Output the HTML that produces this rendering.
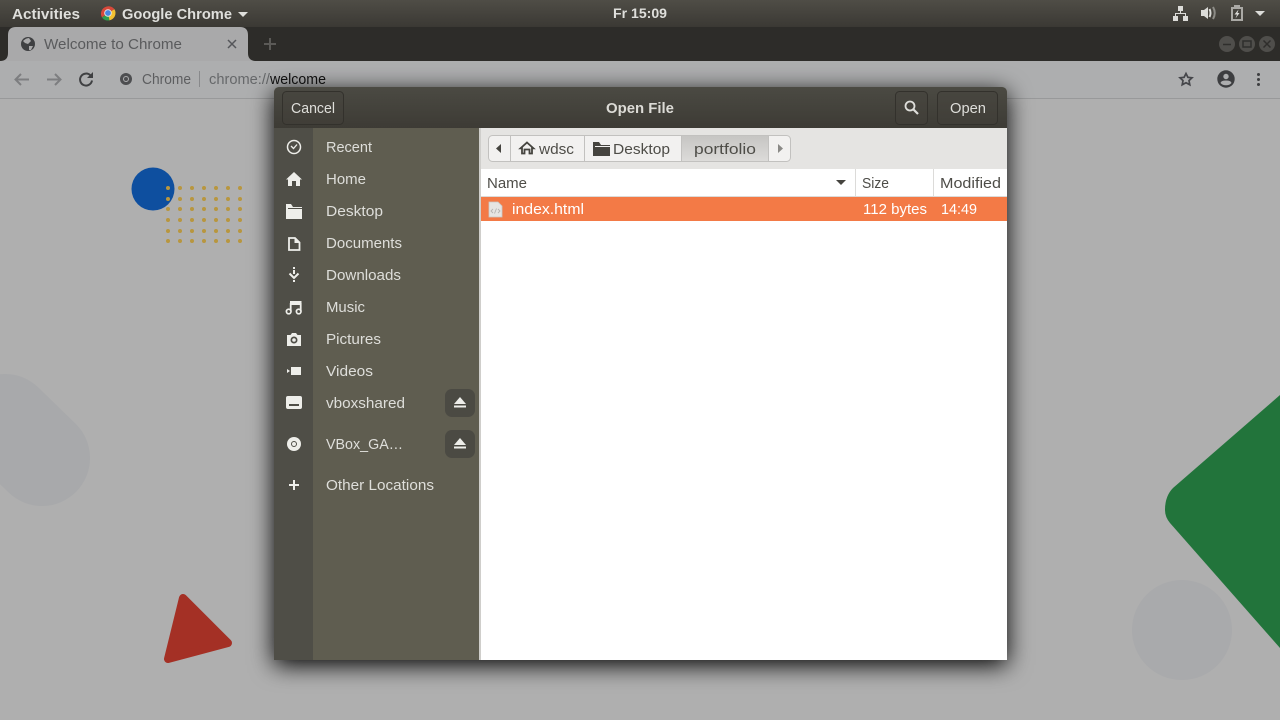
<!DOCTYPE html>
<html><head><meta charset="utf-8"><title>Open File</title>
<style>
html,body{margin:0;padding:0;width:1280px;height:720px;overflow:hidden;background:#afafaf}
svg{display:block}
text{font-family:"Liberation Sans",sans-serif;font-size:14.5px;white-space:pre}
.s{fill:#dededa}
.d{fill:#4e4d48}
.w{fill:#fff}
</style></head><body>
<svg width="1280" height="720" viewBox="0 0 1280 720" xmlns="http://www.w3.org/2000/svg">
<defs>
<linearGradient id="top" x1="0" y1="0" x2="0" y2="1"><stop offset="0" stop-color="#4f4d46"/><stop offset="1" stop-color="#3b3934"/></linearGradient>
<linearGradient id="hdr" x1="0" y1="0" x2="0" y2="1"><stop offset="0" stop-color="#4b4a43"/><stop offset="1" stop-color="#3d3b35"/></linearGradient>
<linearGradient id="pf" x1="0" y1="0" x2="0" y2="1"><stop offset="0" stop-color="#c6c5c3"/><stop offset="1" stop-color="#dcdbd9"/></linearGradient>
<filter id="sh" x="-10%" y="-10%" width="120%" height="120%"><feDropShadow dx="0" dy="5" stdDeviation="12" flood-color="#000" flood-opacity="1"/></filter>
</defs>

<!-- page -->
<rect width="1280" height="720" fill="#afafaf"/>
<line x1="5" y1="422" x2="42" y2="458" stroke="#a8a9ab" stroke-width="96" stroke-linecap="round"/>
<circle cx="1182" cy="630" r="50" fill="#a9aaac"/>
<circle cx="153" cy="189" r="21.5" fill="#0e4f9f"/>
<g fill="#b8963f">
<g id="r"><circle cx="168" cy="188" r="2"/><circle cx="180" cy="188" r="2"/><circle cx="192" cy="188" r="2"/><circle cx="204" cy="188" r="2"/><circle cx="216" cy="188" r="2"/><circle cx="228" cy="188" r="2"/><circle cx="240" cy="188" r="2"/></g>
<use href="#r" y="11"/><use href="#r" y="21"/><use href="#r" y="32"/><use href="#r" y="43"/><use href="#r" y="53"/>
</g>
<path d="M1280 395 L1173 488 Q1165 496 1165 510 Q1165 517 1170 523 L1280 648 Z" fill="#22743b"/>
<polygon points="183,598 228,643 168,659" fill="#a43025" stroke="#a43025" stroke-width="8" stroke-linejoin="round"/>

<!-- toolbar -->
<rect x="0" y="61" width="1280" height="37" fill="#adaeaf"/>
<rect x="0" y="98" width="1280" height="1" fill="#98999a"/>

<!-- tab strip -->
<rect x="0" y="27" width="1280" height="34" fill="#2d2c29"/>
<path d="M0 61 Q8 61 8 53 V35 Q8 27 16 27 H240 Q248 27 248 35 V53 Q248 61 256 61 Z" fill="#a9a9aa"/>
<circle cx="28" cy="44" r="7" fill="#3f4042"/>
<path d="M23 41 Q26 38 29 38 L31 41 L28 44 L25 43 Z M29 46 L33 46 L31 50 L29 50 Z" fill="#a9a9aa"/>
<text x="44" y="49" textLength="138" lengthAdjust="spacingAndGlyphs" fill="#5a5b5d">Welcome to Chrome</text>
<path d="M228 40 L236 48 M236 40 L228 48" stroke="#55565a" stroke-width="1.5" fill="none"/>
<path d="M270 38 V50 M264 44 H276" stroke="#5b5a57" stroke-width="2" fill="none"/>
<g fill="#4f4e4b"><circle cx="1227" cy="44" r="8"/><circle cx="1247" cy="44" r="8"/><circle cx="1267" cy="44" r="8"/></g>
<g stroke="#2f2e2c" fill="none" stroke-width="1.5"><path d="M1223 44.500 H1231"/><rect x="1243" y="41" width="8" height="6"/><path d="M1263.500 40.500 L1270.500 47.500 M1270.500 40.500 L1263.500 47.500"/></g>

<!-- top bar -->
<rect x="0" y="0" width="1280" height="27" fill="url(#top)"/>
<text x="12" y="19" textLength="68" lengthAdjust="spacingAndGlyphs" font-weight="bold" fill="#dfdfdc">Activities</text>
<path d="M108 13 L114.500 9.250 A7.500 7.500 0 0 0 102 17.500 Z" fill="#d8483a"/>
<path d="M108 13 L102 17.500 A7.500 7.500 0 0 0 109.500 20.350 Z" fill="#2f9e4e"/>
<path d="M108 13 L109.500 20.350 A7.500 7.500 0 0 0 114.500 9.250 Z" fill="#f3c132"/>
<circle cx="108" cy="13" r="3.800" fill="#e8e8e8"/><circle cx="108" cy="13" r="2.900" fill="#4a86e0"/>
<text x="122" y="19" textLength="110" lengthAdjust="spacingAndGlyphs" font-weight="bold" fill="#dfdfdc">Google Chrome</text>
<path d="M238 12 H248 L243 17 Z" fill="#dfdfdc"/>
<text x="613" y="18" textLength="54" lengthAdjust="spacingAndGlyphs" font-weight="bold" style="font-size:14px" fill="#dfdfdc">Fr 15:09</text>
<g fill="#dcdcd9">
<rect x="1178" y="6" width="5" height="5"/><rect x="1173" y="16" width="5" height="5"/><rect x="1183" y="16" width="5" height="5"/>
<rect x="1180" y="11" width="1" height="3"/><rect x="1175" y="13" width="11" height="1"/><rect x="1175" y="13" width="1" height="3"/><rect x="1185" y="13" width="1" height="3"/>
<path d="M1201 10 H1204 L1208 7 V19 L1204 16 H1201 Z"/>
<path d="M1209.500 9 Q1211.500 13 1209.500 17" stroke="#dcdcd9" stroke-width="2" fill="none"/>
<path d="M1213 7 Q1216.500 13 1213 19" stroke="#8d8c87" stroke-width="2" fill="none"/>
<path d="M1234 5 H1240 V7 H1243 V21 H1231 V7 H1234 Z M1233 9 V19 H1241 V9 Z" fill="#aaa9a5"/>
<path d="M1238.500 9.500 L1234.500 14.500 H1237 L1235.500 18.500 L1239.500 13 H1237.500 Z"/>
<path d="M1255 11 H1265 L1260 16 Z"/>
</g>

<!-- toolbar icons -->
<path d="M29 79.500 H16 M21 74 L15.500 79.500 L21 85" stroke="#7d7e80" stroke-width="2" fill="none"/>
<path d="M47 79.500 H60 M55 74 L60.500 79.500 L55 85" stroke="#7d7e80" stroke-width="2" fill="none"/>
<path d="M90.500 75.500 A6 6 0 1 0 92 80.500" stroke="#3f4042" stroke-width="2" fill="none"/>
<path d="M93 72 V78 H87 Z" fill="#3f4042"/>
<circle cx="126" cy="79" r="6" fill="#4d4e50"/><circle cx="126" cy="79" r="3" fill="#adaeaf"/><circle cx="126" cy="79" r="2" fill="#4d4e50"/>
<text x="142" y="84" textLength="49" lengthAdjust="spacingAndGlyphs" fill="#5d5e60">Chrome</text>
<rect x="199" y="71" width="1" height="16" fill="#88898b"/>
<text x="209" y="84" textLength="61" lengthAdjust="spacingAndGlyphs" fill="#66686a">chrome://</text>
<text x="270" y="84" textLength="56" lengthAdjust="spacingAndGlyphs" fill="#111">welcome</text>
<path d="M1186 73.500 L1187.900 77.300 L1192 77.800 L1189 80.600 L1189.800 84.800 L1186 82.700 L1182.200 84.800 L1183 80.600 L1180 77.800 L1184.100 77.300 Z" fill="none" stroke="#45464a" stroke-width="1.700"/>
<circle cx="1226" cy="79" r="8.700" fill="#3d3e40"/>
<circle cx="1226" cy="76.500" r="2.700" fill="#adaeaf"/>
<path d="M1220.500 83 Q1221 80.500 1226 80.500 Q1231 80.500 1231.500 83 Q1229.500 85.300 1226 85.300 Q1222.500 85.300 1220.500 83 Z" fill="#adaeaf"/>
<g fill="#3d3e40"><circle cx="1258.500" cy="74.500" r="1.500"/><circle cx="1258.500" cy="79.500" r="1.500"/><circle cx="1258.500" cy="84.500" r="1.500"/></g>

<!-- dialog -->
<g filter="url(#sh)">
<path d="M274 93 Q274 87 280 87 H1001 Q1007 87 1007 93 V660 H274 Z" fill="#5f5d50"/>
</g>
<path d="M274 93 Q274 87 280 87 H1001 Q1007 87 1007 93 V128 H274 Z" fill="url(#hdr)"/>
<rect x="274" y="128" width="39" height="532" fill="#4f4e47"/>
<rect x="313" y="128" width="166" height="532" fill="#5f5d50"/>
<rect x="479" y="128" width="2" height="532" fill="#cfcecb"/>
<rect x="481" y="128" width="526" height="532" fill="#fff"/>
<rect x="481" y="128" width="526" height="41" fill="#e5e4e2"/>

<!-- header buttons -->
<g fill="#45433c" fill-opacity=".35" stroke="#33312c">
<rect x="282.500" y="91.500" width="61" height="33" rx="4"/>
<rect x="895.500" y="91.500" width="32" height="33" rx="4"/>
<rect x="937.500" y="91.500" width="60" height="33" rx="4"/>
</g>
<text x="291" y="113" textLength="44" lengthAdjust="spacingAndGlyphs" class="s">Cancel</text>
<text x="606" y="113" textLength="68" lengthAdjust="spacingAndGlyphs" font-weight="bold" fill="#dcdbd6">Open File</text>
<circle cx="910" cy="106" r="4.500" fill="none" stroke="#dededa" stroke-width="1.800"/>
<path d="M913.500 109.500 L918 114" stroke="#dededa" stroke-width="2.200"/>
<text x="950" y="113" textLength="36" lengthAdjust="spacingAndGlyphs" class="s">Open</text>

<!-- sidebar -->
<text x="326" y="152" textLength="46" lengthAdjust="spacingAndGlyphs" class="s">Recent</text>
<text x="326" y="184" textLength="40" lengthAdjust="spacingAndGlyphs" class="s">Home</text>
<text x="326" y="216" textLength="57" lengthAdjust="spacingAndGlyphs" class="s">Desktop</text>
<text x="326" y="248" textLength="76" lengthAdjust="spacingAndGlyphs" class="s">Documents</text>
<text x="326" y="280" textLength="75" lengthAdjust="spacingAndGlyphs" class="s">Downloads</text>
<text x="326" y="312" textLength="39" lengthAdjust="spacingAndGlyphs" class="s">Music</text>
<text x="326" y="344" textLength="55" lengthAdjust="spacingAndGlyphs" class="s">Pictures</text>
<text x="326" y="376" textLength="47" lengthAdjust="spacingAndGlyphs" class="s">Videos</text>
<text x="326" y="408" textLength="79" lengthAdjust="spacingAndGlyphs" class="s">vboxshared</text>
<text x="326" y="449" textLength="77" lengthAdjust="spacingAndGlyphs" class="s">VBox_GA…</text>
<text x="326" y="490" textLength="108" lengthAdjust="spacingAndGlyphs" class="s">Other Locations</text>

<g fill="#eeeeea">
<circle cx="294" cy="147" r="6.500" fill="none" stroke="#eeeeea" stroke-width="1.500"/>
<path d="M291 146 L293.500 148.500 L297 144.500" fill="none" stroke="#eeeeea" stroke-width="1.300"/>
<path d="M294 172 L302 179.500 H300 V186 H296 V181 H292 V186 H288 V179.500 H286 Z"/>
<path d="M286 204 H291 L293 207 H302 V219 H286 Z"/><rect x="288" y="208" width="14" height="1" fill="#4f4e47"/>
<path d="M289 238 H295 L299.500 242.500 V250 H289 Z" fill="none" stroke="#eeeeea" stroke-width="1.800"/>
<path d="M294.500 237.500 L300 243 H294.500 Z"/>
<rect x="293" y="267" width="2" height="2"/><rect x="293" y="270" width="2" height="4"/>
<path d="M289.500 273.500 L294 278 L298.500 273.500" fill="none" stroke="#eeeeea" stroke-width="2"/>
<rect x="293" y="280" width="2" height="2"/>
<rect x="290" y="301" width="11.500" height="4"/>
<path d="M290.700 303 V311 M300.700 303 V311" stroke="#eeeeea" stroke-width="1.800"/>
<circle cx="288.700" cy="311.500" r="2.300" fill="none" stroke="#eeeeea" stroke-width="1.700"/>
<circle cx="298.700" cy="311.500" r="2.300" fill="none" stroke="#eeeeea" stroke-width="1.700"/>
<path d="M287 335 H290.500 L292 333 H296 L297.500 335 H301 V346 H287 Z"/><circle cx="294" cy="340" r="3.500" fill="#4f4e47"/><circle cx="294" cy="340" r="1.800"/>
<path d="M291 367 H301 V375 H291 Z M287 369 L290 371 L287 373 Z"/>
<path d="M288 396 H300 Q302 396 302 398 V407 Q302 409 300 409 H288 Q286 409 286 407 V398 Q286 396 288 396 Z"/><rect x="289" y="404" width="10" height="2" fill="#4f4e47"/>
<circle cx="294" cy="444" r="7"/><circle cx="294" cy="444" r="2.500" fill="none" stroke="#4f4e47" stroke-width="1"/>
<path d="M293 480 H295 V484 H299 V486 H295 V490 H293 V486 H289 V484 H293 Z"/>
</g>
<g>
<rect x="445" y="389" width="30" height="28" rx="7" fill="#4b4a43"/>
<rect x="445" y="430" width="30" height="28" rx="7" fill="#4b4a43"/>
<g fill="#eeeeea">
<path d="M460 397 L466 404 H454 Z"/><rect x="454" y="405.500" width="12" height="2"/>
<path d="M460 438 L466 445 H454 Z"/><rect x="454" y="446.500" width="12" height="2"/>
</g>
</g>

<!-- path bar -->
<rect x="488.500" y="135.500" width="302" height="26" rx="4" fill="#f2f1f0" stroke="#c2c1bf"/>
<path d="M681 136 H769 V161 H681 Z" fill="url(#pf)"/>
<path d="M510.500 136 V161 M584.500 136 V161 M681.500 136 V161 M768.500 136 V161" stroke="#c2c1bf"/>
<path d="M501 144 V153 L496 148.500 Z" fill="#45443f"/>
<path d="M778 144 V153 L783 148.500 Z" fill="#8a8986"/>
<path d="M527 142.500 L533.500 148.300 H532 V153.500 H529.500 V149.500 H524.500 V153.500 H522 V148.300 H520.500 Z" fill="none" stroke="#45443f" stroke-width="1.800"/>
<path d="M593 142 H599 L601 145 H610 V156 H593 Z" fill="#45443f"/><rect x="595" y="146" width="15" height="1" fill="#f2f1f0"/>
<text x="539" y="154" textLength="35" lengthAdjust="spacingAndGlyphs" class="d">wdsc</text>
<text x="613" y="154" textLength="57" lengthAdjust="spacingAndGlyphs" class="d">Desktop</text>
<text x="694" y="154" textLength="62" lengthAdjust="spacingAndGlyphs" class="d">portfolio</text>

<!-- column headers -->
<rect x="481" y="196" width="526" height="1" fill="#dcdbd9"/>
<rect x="855" y="169" width="1" height="27" fill="#dcdbd9"/>
<rect x="933" y="169" width="1" height="27" fill="#dcdbd9"/>
<text x="487" y="188" textLength="40" lengthAdjust="spacingAndGlyphs" class="d">Name</text>
<path d="M836 180 H846 L841 185 Z" fill="#45443f"/>
<text x="862" y="188" textLength="27" lengthAdjust="spacingAndGlyphs" class="d">Size</text>
<text x="940" y="188" textLength="61" lengthAdjust="spacingAndGlyphs" class="d">Modified</text>

<!-- selected row -->
<rect x="481" y="197" width="526" height="24" fill="#f37a46"/>
<path d="M489 202 H498 L502 206 V217 H489 Z" fill="#e6e5e3" stroke="#c9c8c6" stroke-width=".8"/>
<path d="M493 209 L491 211 L493 213 M498 209 L500 211 L498 213 M496.500 208.500 L494.500 213.500" stroke="#b5b4b2" stroke-width=".9" fill="none"/>
<text x="512" y="214" textLength="72" lengthAdjust="spacingAndGlyphs" class="w">index.html</text>
<text x="863" y="214" textLength="64" lengthAdjust="spacingAndGlyphs" class="w">112 bytes</text>
<text x="941" y="214" textLength="36" lengthAdjust="spacingAndGlyphs" class="w">14:49</text>
</svg>
</body></html>
